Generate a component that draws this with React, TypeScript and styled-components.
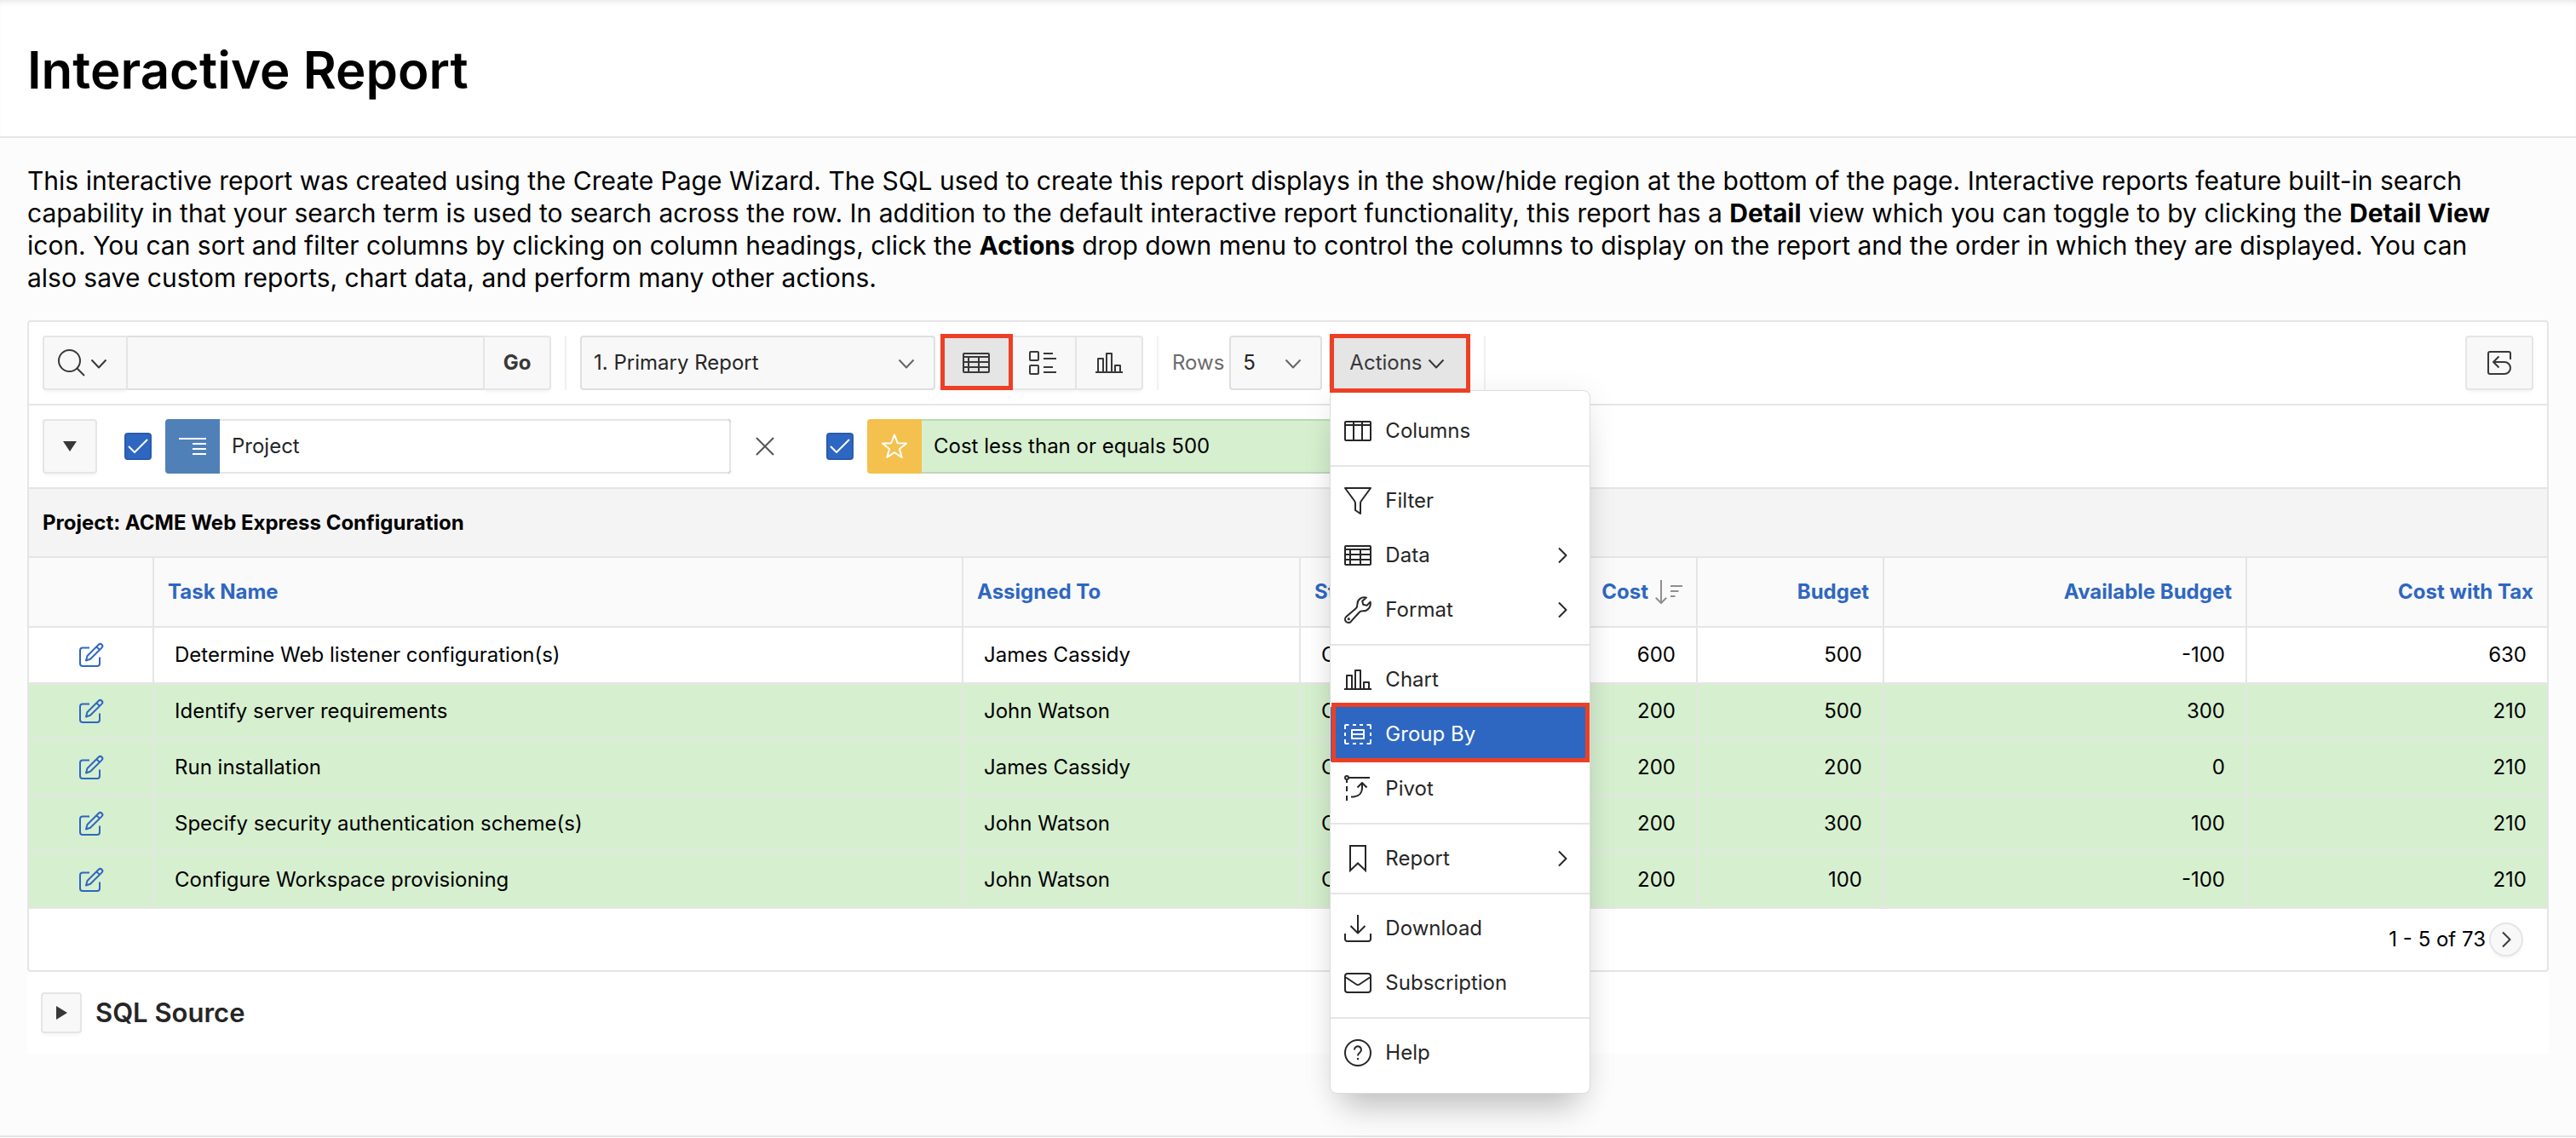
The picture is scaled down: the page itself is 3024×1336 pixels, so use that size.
import React, { useState } from 'react';
import styled, { createGlobalStyle, css } from 'styled-components';

const c = {
  line: '#e5e5e5',
  soft: '#f8f8f8',
  text: '#262626',
  icon: '#383838',
  link: '#2e67c1',
  green: '#d6efcf',
  mark: '#eb4025',
};

const Global = createGlobalStyle`
  *, *::before, *::after { box-sizing: border-box; }
  body {
    margin: 0;
    background: #fcfcfc;
    color: #000;
    font-family: Inter, "Liberation Sans", sans-serif;
    font-size: 24px;
    line-height: 32px;
  }
  button, input, select { font: inherit; color: inherit; margin: 0; }
  button { cursor: pointer; }
`;

const Page = styled.div`
  min-height: 100vh;
  display: flex;
  flex-direction: column;
`;

const Header = styled.header`
  padding: 50px 32px 46px;
  background: #fff;
  border-bottom: 2px solid ${c.line};
  box-shadow: inset 0 6px 6px -4px rgba(0, 0, 0, 0.1);
`;

const Title = styled.h1`
  margin: 0;
  font-size: 60px;
  line-height: 64px;
  font-weight: 600;
`;

const Main = styled.main`
  padding: 31px 32px 96px;
`;

const Intro = styled.p`
  margin: 0 0 31px;
  padding-right: 56px;
  font-size: 30px;
  line-height: 38px;

  b { font-weight: 700; }
`;

const Region = styled.section`
  background: #fff;
  border: 2px solid ${c.line};
  border-radius: 4px;
`;

const Bar = styled.div`
  display: flex;
  align-items: center;
  padding: 16px;
  border-bottom: 2px solid ${c.line};
`;

const Divider = styled.span`
  width: 2px;
  height: 64px;
  margin: 0 16px;
  background: #f0f0f0;
`;

const Spacer = styled.span`
  flex: 1;
`;

const Svg = styled.svg`
  display: block;
  flex: none;
  width: 32px;
  height: 32px;
  fill: none;
  stroke: currentColor;
  stroke-width: 2;
  stroke-linejoin: round;
`;

const Button = styled.button<{ $width?: number; $pressed?: boolean }>`
  position: relative;
  display: flex;
  flex: none;
  align-items: center;
  justify-content: center;
  width: ${p => (p.$width ? p.$width + 'px' : 'auto')};
  height: 64px;
  padding: 0 ${p => (p.$width ? 0 : 22)}px;
  border: 2px solid ${c.line};
  border-radius: 4px;
  background: ${p => (p.$pressed ? '#e5e5e5' : c.soft)};
  color: ${c.icon};
  box-shadow: 0 4px 4px -2px rgba(0, 0, 0, 0.05);
`;

const Joined = styled.div<{ $width?: number }>`
  display: flex;
  width: ${p => (p.$width ? p.$width + 'px' : 'auto')};

  & > * { border-radius: 0; }
  & > * + * { margin-left: -2px; }
  & > :first-child { border-radius: 4px 0 0 4px; }
  & > :last-child { border-radius: 0 4px 4px 0; }
`;

const GoButton = styled(Button)`
  font-weight: 700;
`;

const SearchInput = styled.input`
  flex: 1;
  min-width: 0;
  height: 64px;
  padding: 0 14px;
  border: 2px solid #dfdfdf;
  background: ${c.soft};
  outline: none;
`;

const outline = css`
  content: '';
  position: absolute;
  border: 5px solid ${c.mark};
  pointer-events: none;
`;

const MarkedIconButton = styled(Button)`
  z-index: 1;
  &::after { ${outline} inset: -4px -5px -2px -4px; }
`;

const ActionsButton = styled(Button)`
  z-index: 6;
  &::after { ${outline} inset: -4px -2px -5px -1px; }
`;

const SelectWrap = styled.div<{ $width: number }>`
  position: relative;
  width: ${p => p.$width}px;
  color: #666;

  svg {
    position: absolute;
    top: 16px;
    right: 18px;
    pointer-events: none;
  }
`;

const Select = styled.select`
  display: block;
  appearance: none;
  width: 100%;
  height: 64px;
  padding: 0 48px 0 14px;
  border: 2px solid #dfdfdf;
  border-radius: 4px;
  background: ${c.soft};
  color: ${c.text};
`;

const Views = styled.div`
  margin-left: 8px;
`;

const RowsLabel = styled.label`
  margin-right: 6px;
  color: #6b6b6b;
`;

const MenuAnchor = styled.div`
  position: relative;
  margin-left: 8px;
`;

const Menu = styled.div`
  position: absolute;
  z-index: 5;
  top: 64px;
  left: 1px;
  width: 306px;
  padding: 15px 0;
  border: 1px solid #dcdcdc;
  border-radius: 8px;
  background: #fff;
  box-shadow: 0 32px 36px -16px rgba(0, 0, 0, 0.2), 0 4px 36px rgba(0, 0, 0, 0.08);
`;

const MenuSection = styled.div`
  & + & {
    margin-top: 8px;
    padding-top: 8px;
    border-top: 2px solid ${c.line};
  }
`;

const MenuItem = styled.button<{ $active?: boolean }>`
  position: relative;
  display: flex;
  align-items: center;
  gap: 16px;
  width: 100%;
  height: 64px;
  padding: 0 16px;
  border: 0;
  background: ${p => (p.$active ? c.link : 'transparent')};
  color: ${p => (p.$active ? '#fff' : c.text)};
  text-align: left;

  &::after {
    ${p => p.$active && css`${outline} inset: -5px 0 -1px 1px;`}
  }
`;

const MenuText = styled.span`
  flex: 1;
`;

const Filter = styled.div`
  display: flex;
  align-items: center;
  margin-left: 32px;

  & + & { margin-left: 40px; }
`;

const CheckWrap = styled.span`
  position: relative;
  width: 32px;
  height: 32px;
  margin-right: 16px;
  color: #fff;

  svg {
    position: absolute;
    inset: 0;
    pointer-events: none;
  }
`;

const Check = styled.input`
  display: block;
  appearance: none;
  width: 32px;
  height: 32px;
  border: 2px solid #2a5cab;
  border-radius: 4px;
  background: ${c.link};
`;

const FilterButton = styled.button<{ $tone: string; $fill: string; $edge: string; $ink: string }>`
  display: flex;
  width: 664px;
  height: 64px;
  padding: 0;
  border: 0;
  border-radius: 4px;
  overflow: hidden;
  background: ${p => p.$tone};
  color: ${p => p.$ink};
  text-align: left;

  & > svg {
    margin: 16px;
    color: #fff;
  }
  & > span {
    flex: 1;
    padding: 14px;
    border: solid ${p => p.$edge};
    border-width: 2px 2px 2px 0;
    border-radius: 0 4px 4px 0;
    background: ${p => p.$fill};
  }
`;

const CloseButton = styled.button`
  display: flex;
  align-items: center;
  justify-content: center;
  width: 64px;
  height: 64px;
  margin-left: 8px;
  padding: 0;
  border: 0;
  background: none;
  color: #555;
`;

const GroupHeading = styled.h2`
  margin: 0;
  padding: 24px 16px 23px;
  border-bottom: 2px solid ${c.line};
  background: #f4f4f4;
  font-size: 24px;
  line-height: 32px;
  font-weight: 700;
`;

const Table = styled.table`
  width: 100%;
  table-layout: fixed;
  border-collapse: separate;
  border-spacing: 0;

  th, td {
    border-bottom: 2px solid ${c.line};
    border-right: 2px solid ${c.line};
    text-align: left;
    white-space: nowrap;
    overflow: hidden;
  }
  th:last-child, td:last-child { border-right: 0; }
`;

const Th = styled.th<{ $num?: boolean }>`
  height: 82px;
  padding: 0 16px;
  background: #fafafa;

  a {
    display: flex;
    align-items: center;
    justify-content: ${p => (p.$num ? 'flex-end' : 'flex-start')};
    gap: 8px;
    color: ${c.link};
    font-weight: 700;
    text-decoration: none;
  }
  svg { color: #8f8f8f; }
`;

const Row = styled.tr<{ $hit?: boolean }>`
  background: ${p => (p.$hit ? c.green : '#fff')};
`;

const Td = styled.td<{ $num?: boolean }>`
  && { text-align: ${p => (p.$num ? 'right' : 'left')}; }
  height: 66px;
  padding: 0 24px;
`;

const EditCell = styled.td`
  padding: 0;

  a {
    display: flex;
    justify-content: center;
    color: ${c.link};
  }
`;

const Pager = styled.div`
  display: flex;
  align-items: center;
  justify-content: flex-end;
  gap: 4px;
  padding: 16px 28px;
`;

const NextButton = styled(Button)`
  height: 40px;
  border-radius: 50%;
`;

const Source = styled.section`
  display: flex;
  align-items: center;
  gap: 16px;
  padding: 24px 16px;
  background: #fff;

  h2 {
    margin: 0;
    color: ${c.text};
    font-size: 31px;
    line-height: 32px;
    font-weight: 600;
  }
`;

const ToggleButton = styled(Button)`
  height: 48px;
`;

const Footer = styled.footer`
  border-top: 2px solid ${c.line};
`;

const paths = {
  search: <><circle cx="13.5" cy="13.5" r="12.5" /><path d="M22.5 22.5L31 31" /></>,
  down: <path d="M7.5 12.5L16 21.5L24.5 12.5" />,
  next: <path d="M12 7.5L20.5 16L12 24.5" />,
  close: <path d="M6 6L26 26M26 6L6 26" />,
  check: <path d="M5 16L12 23L27 8" />,
  table: <><rect x="1" y="5" width="30" height="22" rx="1" /><path d="M1 9H31M1 15H31M1 21H31M7 9V27M19 9V27" /></>,
  detail: <><rect x="1" y="3" width="10" height="10" rx="1" /><rect x="1" y="19" width="10" height="10" rx="1" /><path d="M17 5H28M17 11H32M17 21H28M17 27H32" /></>,
  chart: <path d="M0 27H32M3 27V11H9V27M13 27V5H19V27M23 27V19H29V27" />,
  columns: <><rect x="1" y="5" width="30" height="22" rx="1" /><path d="M1 9H31M11 5V27M21 5V27" /></>,
  filter: <path d="M1 1H31L20 16Q19 17.5 19 19V31L13 27V19Q13 17.5 12 16Z" />,
  format: <><path d="M26 1.6C20 .2 15.5 4 15.5 9C15.5 11.4 15 13 13.5 14.4L2.3 24C.6 25.6 .6 28.2 2.1 29.8C3.7 31.4 6.3 31.4 7.9 29.7L17.5 19C18.6 17.7 20 17.3 22 17.3C28 17.3 31.8 12.2 30.6 6.6L26.5 10.9L22.3 9.8L21.2 5.8Z" /><circle cx="5.3" cy="26.7" r=".6" /></>,
  group: <><path d="M1 10V6a1 1 0 0 1 1-1H5.5M10 5H14M18 5H22M26.5 5H30a1 1 0 0 1 1 1V10M31 14V18M31 22V26a1 1 0 0 1-1 1H26.5M22 27H18M14 27H10M5.5 27H2a1 1 0 0 1-1-1V22M1 18V14" /><rect x="9" y="11" width="14" height="10" /><path d="M9 16H23" /></>,
  pivot: <><circle cx="3" cy="3" r="2" /><path d="M5 3H30M3 6V9M3 13V19M3 24V30M8 25.5H11C17 25 21 21 21 15V9M15.5 14.5L21 9L26.5 14.5" /></>,
  report: <path d="M7 1H25V30L16 21.5L7 30Z" strokeLinejoin="miter" />,
  download: <path d="M16 0V21M7.5 13L16 21.5L24.5 13M1 22V28.5a2.5 2.5 0 0 0 2.5 2.5H28.5a2.5 2.5 0 0 0 2.5-2.5V22" />,
  mail: <><rect x="1" y="5" width="30" height="22" rx="3" /><path d="M2 9.5L14 17.5Q16 19 18 17.5L30 9.5" /></>,
  help: <><circle cx="16" cy="16" r="15" /><path d="M12 12.5a4 4 0 1 1 6.5 3C17 16.5 16 17.3 16 19.5M16 22V24.2" /></>,
  reset: <path d="M29 12V5a2 2 0 0 0-2-2H5a2 2 0 0 0-2 2V27a2 2 0 0 0 2 2H22a7 7 0 0 0 0-14H9M15.5 8.5L9 15L15.5 21.5" />,
  edit: <path d="M14 7.5H6a3 3 0 0 0-3 3V26a3 3 0 0 0 3 3H23a3 3 0 0 0 3-3V18.5M10 22.5L11.5 17L24.8 3.7a2.6 2.6 0 0 1 3.7 3.7L15 20.8ZM22.3 6.2L26 9.9" />,
  indent: <path d="M0 7H32M16 13H32M16 19H32M16 25H32" />,
  star: <path d="M16 2.5L19.7 12.2L30 12.6L21.9 19L24.7 29L16 23.2L7.3 29L10.1 19L2 12.6L12.3 12.2Z" />,
  sort: <path d="M7 2V29M.8 22.8L7 29L13.2 22.8M18 9H32M18 15H27.5M18 21H23.5" />,
  solidDown: <path d="M8 10H24L16 22Z" fill="currentColor" stroke="none" />,
  solidNext: <path d="M10 8L23 16L10 24Z" fill="currentColor" stroke="none" />,
};

type IconName = keyof typeof paths;

const Icon = ({ name }: { name: IconName }) => (
  <Svg viewBox="0 0 32 32" aria-hidden="true">{paths[name]}</Svg>
);

type Item = { icon: IconName; label: string; sub?: boolean; active?: boolean };

const menu: Item[][] = [
  [{ icon: 'columns', label: 'Columns' }],
  [
    { icon: 'filter', label: 'Filter' },
    { icon: 'table', label: 'Data', sub: true },
    { icon: 'format', label: 'Format', sub: true },
  ],
  [
    { icon: 'chart', label: 'Chart' },
    { icon: 'group', label: 'Group By', active: true },
    { icon: 'pivot', label: 'Pivot' },
  ],
  [{ icon: 'report', label: 'Report', sub: true }],
  [
    { icon: 'download', label: 'Download' },
    { icon: 'mail', label: 'Subscription' },
  ],
  [{ icon: 'help', label: 'Help' }],
];

const columns: { label: string; width: number; num?: boolean; sorted?: boolean }[] = [
  { label: 'Task Name', width: 950 },
  { label: 'Assigned To', width: 396 },
  { label: 'Status', width: 320 },
  { label: 'Cost', width: 146, num: true, sorted: true },
  { label: 'Budget', width: 219, num: true },
  { label: 'Available Budget', width: 426, num: true },
  { label: 'Cost with Tax', width: 352, num: true },
];

const tasks = [
  { name: 'Determine Web listener configuration(s)', who: 'James Cassidy', cost: 600, budget: 500, left: -100, tax: 630 },
  { name: 'Identify server requirements', who: 'John Watson', cost: 200, budget: 500, left: 300, tax: 210 },
  { name: 'Run installation', who: 'James Cassidy', cost: 200, budget: 200, left: 0, tax: 210 },
  { name: 'Specify security authentication scheme(s)', who: 'John Watson', cost: 200, budget: 300, left: 100, tax: 210 },
  { name: 'Configure Workspace provisioning', who: 'John Watson', cost: 200, budget: 100, left: -100, tax: 210 },
];

const Checkbox = ({ label }: { label: string }) => {
  const [on, setOn] = useState(true);
  return (
    <CheckWrap>
      <Check type="checkbox" aria-label={label} checked={on} onChange={e => setOn(e.target.checked)} />
      {on && <Icon name="check" />}
    </CheckWrap>
  );
};

const ActionsMenu = () => {
  const [open, setOpen] = useState(true);
  return (
    <MenuAnchor>
      <ActionsButton $pressed aria-haspopup="menu" aria-expanded={open} onClick={() => setOpen(!open)}>
        Actions<Icon name="down" />
      </ActionsButton>
      {open && (
        <Menu role="menu">
          {menu.map((section, i) => (
            <MenuSection key={i}>
              {section.map(item => (
                <MenuItem key={item.label} role="menuitem" $active={item.active}>
                  <Icon name={item.icon} />
                  <MenuText>{item.label}</MenuText>
                  {item.sub && <Icon name="next" />}
                </MenuItem>
              ))}
            </MenuSection>
          ))}
        </Menu>
      )}
    </MenuAnchor>
  );
};

export default function App() {
  return (
    <Page>
      <Global />
      <Header>
        <Title>Interactive Report</Title>
      </Header>
      <Main>
        <Intro>
          This interactive report was created using the Create Page Wizard. The SQL used to create this report
          displays in the show/hide region at the bottom of the page. Interactive reports feature built-in search
          capability in that your search term is used to search across the row. In addition to the default
          interactive report functionality, this report has a <b>Detail</b> view which you can toggle to by clicking
          the <b>Detail View</b> icon. You can sort and filter columns by clicking on column headings, click
          the <b>Actions</b> drop down menu to control the columns to display on the report and the order in which
          they are displayed. You can also save custom reports, chart data, and perform many other actions.
        </Intro>
        <Region>
          <Bar>
            <Joined $width={597}>
              <Button $width={100} aria-label="Select columns to search">
                <Icon name="search" /><Icon name="down" />
              </Button>
              <SearchInput type="text" aria-label="Search" />
              <GoButton $width={80}>Go</GoButton>
            </Joined>
            <Divider />
            <SelectWrap $width={417}>
              <Select aria-label="Report">
                <option>1. Primary Report</option>
              </Select>
              <Icon name="down" />
            </SelectWrap>
            <Views>
              <Joined>
                <MarkedIconButton $width={80} $pressed aria-label="View report"><Icon name="table" /></MarkedIconButton>
                <Button $width={80} aria-label="View detail"><Icon name="detail" /></Button>
                <Button $width={80} aria-label="View chart"><Icon name="chart" /></Button>
              </Joined>
            </Views>
            <Divider />
            <RowsLabel htmlFor="rows">Rows</RowsLabel>
            <SelectWrap $width={109}>
              <Select id="rows">
                <option>5</option>
              </Select>
              <Icon name="down" />
            </SelectWrap>
            <ActionsMenu />
            <Divider />
            <Spacer />
            <Button $width={80} aria-label="Reset"><Icon name="reset" /></Button>
          </Bar>
          <Bar>
            <Button $width={64} aria-label="Collapse filters"><Icon name="solidDown" /></Button>
            <Filter>
              <Checkbox label="Enable control break" />
              <FilterButton $tone="#4f81b8" $fill="#fff" $edge={c.line} $ink={c.text}>
                <Icon name="indent" /><span>Project</span>
              </FilterButton>
              <CloseButton aria-label="Remove control break"><Icon name="close" /></CloseButton>
            </Filter>
            <Filter>
              <Checkbox label="Enable highlight" />
              <FilterButton $tone="#f4c14f" $fill={c.green} $edge="#bdd7b7" $ink="#000">
                <Icon name="star" /><span>Cost less than or equals 500</span>
              </FilterButton>
            </Filter>
          </Bar>
          <GroupHeading>Project: ACME Web Express Configuration</GroupHeading>
          <Table>
            <colgroup>
              <col width={147} />
              {columns.map(col => <col key={col.label} width={col.width} />)}
            </colgroup>
            <thead>
              <tr>
                <Th aria-label="Edit" />
                {columns.map(col => (
                  <Th key={col.label} $num={col.num}>
                    <a href="#sort">{col.label}{col.sorted && <Icon name="sort" />}</a>
                  </Th>
                ))}
              </tr>
            </thead>
            <tbody>
              {tasks.map(t => (
                <Row key={t.name} $hit={t.cost <= 500}>
                  <EditCell><a href="#edit" aria-label="Edit task"><Icon name="edit" /></a></EditCell>
                  <Td>{t.name}</Td>
                  <Td>{t.who}</Td>
                  <Td>Closed</Td>
                  <Td $num>{t.cost}</Td>
                  <Td $num>{t.budget}</Td>
                  <Td $num>{t.left}</Td>
                  <Td $num>{t.tax}</Td>
                </Row>
              ))}
            </tbody>
          </Table>
          <Pager>
            1 - 5 of 73
            <NextButton $width={40} aria-label="Next"><Icon name="next" /></NextButton>
          </Pager>
        </Region>
        <Source>
          <ToggleButton $width={48} aria-label="Show SQL Source"><Icon name="solidNext" /></ToggleButton>
          <h2>SQL Source</h2>
        </Source>
      </Main>
      <Footer />
    </Page>
  );
}
